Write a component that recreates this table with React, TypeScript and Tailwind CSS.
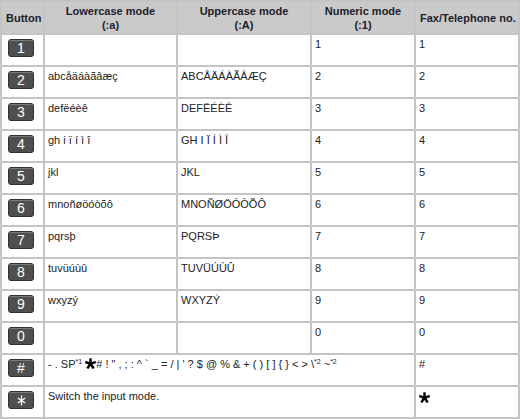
type Row = {
  key: string;
  lower?: string;
  upper?: string;
  num?: string;
  fax?: string;
};

const rows: Row[] = [
  { key: "1", lower: "", upper: "", num: "1", fax: "1" },
  { key: "2", lower: "abcåäáàãâæç", upper: "ABCÅÄÁÀÃÂÆÇ", num: "2", fax: "2" },
  { key: "3", lower: "defëéèê", upper: "DEFËÉÈÊ", num: "3", fax: "3" },
  { key: "4", lower: "gh i ï í ì î", upper: "GH I Ï Í Ì Î", num: "4", fax: "4" },
  { key: "5", lower: "jkl", upper: "JKL", num: "5", fax: "5" },
  { key: "6", lower: "mnoñøöóòõô", upper: "MNOÑØÖÓÒÕÔ", num: "6", fax: "6" },
  { key: "7", lower: "pqrsþ", upper: "PQRSÞ", num: "7", fax: "7" },
  { key: "8", lower: "tuvüúùû", upper: "TUVÜÚÙÛ", num: "8", fax: "8" },
  { key: "9", lower: "wxyzý", upper: "WXYZÝ", num: "9", fax: "9" },
  { key: "0", lower: "", upper: "", num: "0", fax: "0" },
];

function StarMark({ size = 11 }: { size?: number }) {
  // heavy five-spoke asterisk
  return (
    <svg width={size} height={size} viewBox="0 0 20 20" className="inline-block align-[-1px]">
      <g stroke="#000" strokeWidth="4.4">
        <line x1="10" y1="10.5" x2="10" y2="0.5" />
        <line x1="10" y1="10.5" x2="19.5" y2="7.2" />
        <line x1="10" y1="10.5" x2="15.8" y2="19" />
        <line x1="10" y1="10.5" x2="4.2" y2="19" />
        <line x1="10" y1="10.5" x2="0.5" y2="7.2" />
      </g>
    </svg>
  );
}

function KeyCap({ label }: { label: string }) {
  return (
    <div className="flex h-[18px] w-[26px] items-center justify-center rounded-[3px] border border-[#2f2f2f] bg-[#4f4f4f] text-[14px] leading-none text-white shadow-[inset_0_1px_0_#7a7a7a]">
      {label === "*" ? (
        <svg width="9" height="11" viewBox="0 0 9 11">
          <g stroke="#fff" strokeWidth="1.2">
            <line x1="4.5" y1="0.5" x2="4.5" y2="10.5" />
            <line x1="0.8" y1="3" x2="8.2" y2="8" />
            <line x1="8.2" y1="3" x2="0.8" y2="8" />
          </g>
        </svg>
      ) : (
        label
      )}
    </div>
  );
}

const th = "border-2 border-[#c4c4c4] bg-[#cacaca] px-1 text-center align-middle text-[11px] font-bold leading-[14px] text-[#1c1c2c] whitespace-nowrap";
const td = "border-2 border-[#c4c4c4] px-[3px] pt-[3px] align-top text-[11px] leading-[13px] text-[#222]";
const keyTd = "border-2 border-[#c4c4c4] pl-[6px] pt-[4px] align-top";
const sup = "relative top-[-4px] align-baseline text-[7px] leading-none";

export default function App() {
  return (
    <div className="h-[419px] w-[520px] overflow-hidden bg-white" style={{ fontFamily: '"Liberation Sans", Arial, sans-serif' }}>
      <table className="w-[518px] table-fixed border-collapse border-2 border-[#c4c4c4]">
        <colgroup>
          <col className="w-[43px]" />
          <col className="w-[133px]" />
          <col className="w-[134px]" />
          <col className="w-[104px]" />
          <col className="w-[104px]" />
        </colgroup>
        <thead>
          <tr className="h-[33px]">
            <th className={th + " px-0"}>Button</th>
            <th className={th}>
              Lowercase mode
              <br />
              (:a)
            </th>
            <th className={th}>
              Uppercase mode
              <br />
              (:A)
            </th>
            <th className={th}>
              Numeric mode
              <br />
              (:1)
            </th>
            <th className={th + " px-0"}>Fax/Telephone no.</th>
          </tr>
        </thead>
        <tbody>
          {rows.map((r) => (
            <tr key={r.key} className="h-[32px]">
              <td className={keyTd}>
                <KeyCap label={r.key} />
              </td>
              <td className={td}>{r.lower}</td>
              <td className={td}>{r.upper}</td>
              <td className={td}>{r.num}</td>
              <td className={td}>{r.fax}</td>
            </tr>
          ))}
          <tr className="h-[32px]">
            <td className={keyTd}>
              <KeyCap label="#" />
            </td>
            <td colSpan={3} className={td + " whitespace-nowrap"}>
              - . SP<span className={sup}>*1</span> <StarMark size={11} /># ! " , ; : ^ ` _ = / | ' ? $ @ % &amp; + ( ) [ ] {"{"} {"}"} &lt; &gt; \
              <span className={sup}>*2</span> ~<span className={sup}>*2</span>
            </td>
            <td className={td}>#</td>
          </tr>
          <tr className="h-[32px]">
            <td className={keyTd}>
              <KeyCap label="*" />
            </td>
            <td colSpan={3} className={td}>
              Switch the input mode.
            </td>
            <td className={td + " pt-[5px]"}>
              <StarMark size={11} />
            </td>
          </tr>
        </tbody>
      </table>
    </div>
  );
}
